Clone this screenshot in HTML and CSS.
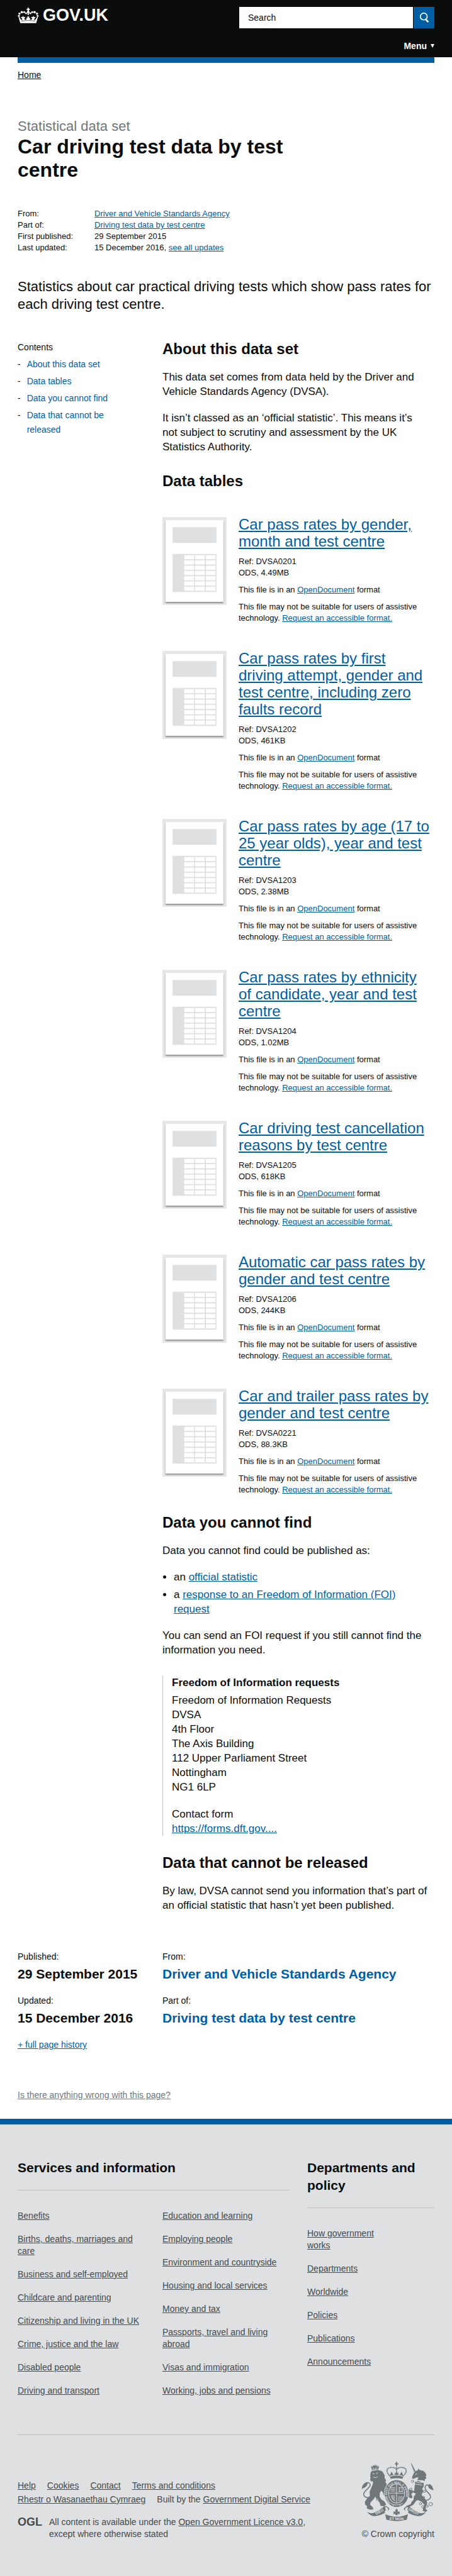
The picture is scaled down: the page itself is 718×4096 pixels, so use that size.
FILE: index.html
```
<!DOCTYPE html>
<html lang="en">
<head>
<meta charset="utf-8">
<meta name="viewport" content="width=device-width, initial-scale=1">
<title>Car driving test data by test centre - GOV.UK</title>
<link rel="stylesheet" href="styles.css">
</head>
<body>
<svg class="sprite" aria-hidden="true">
  <symbol id="spreadsheet" viewBox="0 0 297 420" preserveAspectRatio="none">
    <path fill="#dee0e2" d="M36 36h225v81H36zM36 174h225v195H36z"/>
    <g fill="#fff">
      <path d="M96 180h50v21H96zM151 180h50v21h-50zM207 180h49v21h-49z"/>
      <path d="M96 207h50v21H96zM151 207h50v21h-50zM207 207h49v21h-49z"/>
      <path d="M96 234h50v21H96zM151 234h50v21h-50zM207 234h49v21h-49z"/>
      <path d="M96 261h50v21H96zM151 261h50v21h-50zM207 261h49v21h-49z"/>
      <path d="M96 288h50v21H96zM151 288h50v21h-50zM207 288h49v21h-49z"/>
      <path d="M96 315h50v21H96zM151 315h50v21h-50zM207 315h49v21h-49z"/>
      <path d="M96 342h50v21H96zM151 342h50v21h-50zM207 342h49v21h-49z"/>
    </g>
  </symbol>
</svg>

<header class="site-header">
  <div class="header-row">
    <a class="logo" href="#">
      <svg class="crown" viewBox="91 36 107 79" aria-hidden="true" fill="#fff">
        <path d="M141 37h6v5h5v6h-5l1 6a6 6 0 0 1-2 11l2 8h-8l2-8a6 6 0 0 1-2-11l1-6h-5v-6h5z"/>
        <circle cx="97" cy="78" r="5"/><circle cx="100" cy="67" r="5.500"/><circle cx="112" cy="59" r="6"/><circle cx="124" cy="59" r="5"/><circle cx="133" cy="65" r="4.500"/>
        <circle cx="191" cy="78" r="5"/><circle cx="188" cy="67" r="5.500"/><circle cx="176" cy="59" r="6"/><circle cx="164" cy="59" r="5"/><circle cx="155" cy="65" r="4.500"/>
        <path d="M95 83l5 1 8 14 5-2-1-7-4-1v-5l7 1 3-8 3 8 7-1v5l-4 2 3 7 7-1 5-4-5 1v-6l6 2-1-8h10l-1 8 6-2v6l-5-1 5 4 7 1 3-7-4-2v-5l7 1 3-8 3 8 7-1v5l-4 1-1 7 5 2 8-14 5-1-9 31h-80z"/>
        <path fill="none" stroke="#0b0c0c" stroke-width="2" d="M108 104q36-6 72 0M128 90l3 10M160 90l-3 10M112 92l2 9M176 92l-2 9"/>
      </svg>
      <span>GOV.UK</span>
    </a>
    <form class="search" action="#" role="search">
      <input class="search-input" type="search" aria-label="Search" placeholder="Search">
      <button class="search-button" type="submit" aria-label="Search GOV.UK">
        <svg viewBox="0 0 20 24" aria-hidden="true" fill="none" stroke="#fff"><circle cx="9" cy="10" r="6.500" stroke-width="2"/><path d="M13 15.500l4.500 5" stroke-width="3"/></svg>
      </button>
    </form>
  </div>
  <button class="menu" type="button">Menu<svg viewBox="0 0 6 6" aria-hidden="true"><path fill="#fff" d="M0 0h6L3 6z"/></svg></button>
</header>

<main class="wrap">
  <div class="bar"></div>
  <nav class="crumbs" aria-label="Breadcrumb"><a href="#">Home</a></nav>

  <p class="context">Statistical data set</p>
  <h1>Car driving test data by test centre</h1>

  <dl class="meta">
    <dt>From:</dt><dd><a href="#">Driver and Vehicle Standards Agency</a></dd>
    <dt>Part of:</dt><dd><a href="#">Driving test data by test centre</a></dd>
    <dt>First published:</dt><dd>29 September 2015</dd>
    <dt>Last updated:</dt><dd>15 December 2016, <a href="#">see all updates</a></dd>
  </dl>

  <p class="lead">Statistics about car practical driving tests which show pass rates for each driving test centre.</p>

  <div class="columns">
    <nav class="contents" aria-label="Contents">
      <h2>Contents</h2>
      <ol>
        <li><a href="#about">About this data set</a></li>
        <li><a href="#tables">Data tables</a></li>
        <li><a href="#find">Data you cannot find</a></li>
        <li><a href="#released">Data that cannot be released</a></li>
      </ol>
    </nav>

    <article class="govspeak">
      <h2 id="about">About this data set</h2>
      <p>This data set comes from data held by the Driver and Vehicle Standards Agency (DVSA).</p>
      <p>It isn’t classed as an ‘official statistic’. This means it’s not&nbsp;subject to scrutiny and assessment by the UK Statistics Authority.</p>

      <h2 id="tables">Data tables</h2>
      <div class="attachments">
        <section class="attachment">
          <a class="thumb" href="#" aria-label="Car pass rates by gender, month and test centre"><svg aria-hidden="true"><use href="#spreadsheet"/></svg></a>
          <div class="details">
            <h3><a href="#">Car pass rates by gender, month and test centre</a></h3>
            <p>Ref: DVSA0201<br>ODS, 4.49MB</p>
            <p>This file is in an <a href="#">OpenDocument</a> format</p>
            <p>This file may not be suitable for users of assistive technology. <a href="#">Request an accessible format.</a></p>
          </div>
        </section>
        <section class="attachment">
          <a class="thumb" href="#" aria-label="Car pass rates by first driving attempt"><svg aria-hidden="true"><use href="#spreadsheet"/></svg></a>
          <div class="details">
            <h3><a href="#">Car pass rates by first driving attempt, gender and test centre, including zero faults record</a></h3>
            <p>Ref: DVSA1202<br>ODS, 461KB</p>
            <p>This file is in an <a href="#">OpenDocument</a> format</p>
            <p>This file may not be suitable for users of assistive technology. <a href="#">Request an accessible format.</a></p>
          </div>
        </section>
        <section class="attachment">
          <a class="thumb" href="#" aria-label="Car pass rates by age"><svg aria-hidden="true"><use href="#spreadsheet"/></svg></a>
          <div class="details">
            <h3><a href="#">Car pass rates by age (17 to 25 year olds), year and test centre</a></h3>
            <p>Ref: DVSA1203<br>ODS, 2.38MB</p>
            <p>This file is in an <a href="#">OpenDocument</a> format</p>
            <p>This file may not be suitable for users of assistive technology. <a href="#">Request an accessible format.</a></p>
          </div>
        </section>
        <section class="attachment">
          <a class="thumb" href="#" aria-label="Car pass rates by ethnicity"><svg aria-hidden="true"><use href="#spreadsheet"/></svg></a>
          <div class="details">
            <h3><a href="#">Car pass rates by ethnicity of candidate, year and test centre</a></h3>
            <p>Ref: DVSA1204<br>ODS, 1.02MB</p>
            <p>This file is in an <a href="#">OpenDocument</a> format</p>
            <p>This file may not be suitable for users of assistive technology. <a href="#">Request an accessible format.</a></p>
          </div>
        </section>
        <section class="attachment">
          <a class="thumb" href="#" aria-label="Car driving test cancellation reasons"><svg aria-hidden="true"><use href="#spreadsheet"/></svg></a>
          <div class="details">
            <h3><a href="#">Car driving test cancellation reasons by test centre</a></h3>
            <p>Ref: DVSA1205<br>ODS, 618KB</p>
            <p>This file is in an <a href="#">OpenDocument</a> format</p>
            <p>This file may not be suitable for users of assistive technology. <a href="#">Request an accessible format.</a></p>
          </div>
        </section>
        <section class="attachment">
          <a class="thumb" href="#" aria-label="Automatic car pass rates"><svg aria-hidden="true"><use href="#spreadsheet"/></svg></a>
          <div class="details">
            <h3><a href="#">Automatic car pass rates by gender and test centre</a></h3>
            <p>Ref: DVSA1206<br>ODS, 244KB</p>
            <p>This file is in an <a href="#">OpenDocument</a> format</p>
            <p>This file may not be suitable for users of assistive technology. <a href="#">Request an accessible format.</a></p>
          </div>
        </section>
        <section class="attachment">
          <a class="thumb" href="#" aria-label="Car and trailer pass rates"><svg aria-hidden="true"><use href="#spreadsheet"/></svg></a>
          <div class="details">
            <h3><a href="#">Car and trailer pass rates by gender and test centre</a></h3>
            <p>Ref: DVSA0221<br>ODS, 88.3KB</p>
            <p>This file is in an <a href="#">OpenDocument</a> format</p>
            <p>This file may not be suitable for users of assistive technology. <a href="#">Request an accessible format.</a></p>
          </div>
        </section>
      </div>

      <h2 id="find">Data you cannot find</h2>
      <p>Data you cannot find could be published as:</p>
      <ul class="bullets">
        <li>an <a href="#">official statistic</a></li>
        <li>a <a href="#">response to an Freedom of Information (FOI) request</a></li>
      </ul>
      <p>You can send an FOI request if you still cannot find the information you need.</p>

      <div class="contact">
        <h3>Freedom of Information requests</h3>
        <address>Freedom of Information Requests<br>DVSA<br>4th Floor<br>The Axis Building<br>112 Upper Parliament Street<br>Nottingham<br>NG1 6LP</address>
        <p>Contact form<br><a href="#">https://forms.dft.gov....</a></p>
      </div>

      <h2 id="released">Data that cannot be released</h2>
      <p>By law, DVSA cannot send you information that’s part of an official statistic that hasn’t yet been published.</p>
    </article>
  </div>

  <div class="columns published">
    <dl>
      <div><dt>Published:</dt><dd>29 September 2015</dd></div>
      <div><dt>Updated:</dt><dd>15 December 2016</dd></div>
    </dl>
    <dl class="wide">
      <div><dt>From:</dt><dd><a href="#">Driver and Vehicle Standards Agency</a></dd></div>
      <div><dt>Part of:</dt><dd><a href="#">Driving test data by test centre</a></dd></div>
    </dl>
  </div>
  <p class="history"><a href="#">+ full page history</a></p>
  <p class="report"><a href="#">Is there anything wrong with this page?</a></p>
</main>

<footer class="site-footer">
  <div class="wrap">
    <div class="columns">
      <section class="services">
        <h2>Services and information</h2>
        <div class="lists">
          <ul>
            <li><a href="#">Benefits</a></li>
            <li><a href="#">Births, deaths, marriages and care</a></li>
            <li><a href="#">Business and self-employed</a></li>
            <li><a href="#">Childcare and parenting</a></li>
            <li><a href="#">Citizenship and living in the UK</a></li>
            <li><a href="#">Crime, justice and the law</a></li>
            <li><a href="#">Disabled people</a></li>
            <li><a href="#">Driving and transport</a></li>
          </ul>
          <ul>
            <li><a href="#">Education and learning</a></li>
            <li><a href="#">Employing people</a></li>
            <li><a href="#">Environment and countryside</a></li>
            <li><a href="#">Housing and local services</a></li>
            <li><a href="#">Money and tax</a></li>
            <li><a href="#">Passports, travel and living abroad</a></li>
            <li><a href="#">Visas and immigration</a></li>
            <li><a href="#">Working, jobs and pensions</a></li>
          </ul>
        </div>
      </section>
      <section class="departments">
        <h2>Departments and policy</h2>
        <ul>
          <li><a href="#">How government works</a></li>
          <li><a href="#">Departments</a></li>
          <li><a href="#">Worldwide</a></li>
          <li><a href="#">Policies</a></li>
          <li><a href="#">Publications</a></li>
          <li><a href="#">Announcements</a></li>
        </ul>
      </section>
    </div>

    <div class="legal">
      <div class="legal-text">
        <ul class="legal-links">
          <li><a href="#">Help</a></li>
          <li><a href="#">Cookies</a></li>
          <li><a href="#">Contact</a></li>
          <li><a href="#">Terms and conditions</a></li>
          <li><a href="#">Rhestr o Wasanaethau Cymraeg</a></li>
          <li>Built by the <a href="#">Government Digital Service</a></li>
        </ul>
        <div class="licence">
          <span class="ogl">OGL</span>
          <p>All content is available under the <a href="#">Open Government Licence v3.0</a>, except where otherwise stated</p>
        </div>
      </div>
      <div class="copyright">
        <svg viewBox="68 46 378 310" role="img" aria-label="Royal coat of arms" fill="#6f777b" stroke-linejoin="round" stroke-linecap="round">
          <!-- crown -->
          <path d="M249 48h6v7h6v6h-6v8a7 7 0 0 1-6 0v-8h-6v-6h6z"/>
          <path fill="none" stroke="#6f777b" stroke-width="6" stroke-linecap="butt" stroke-dasharray="6 2" d="M219 122C194 100 199 80 220 77c14-2 26 2 32 10 6-8 18-12 32-10 21 3 26 23 1 45"/>
          <path fill="none" stroke="#6f777b" stroke-width="4" d="M252 72v44"/>
          <path d="M217 120l4-10 5-13 7 14 6 4 5-4-3-8 7 3 4-10 4 10 7-3-3 8 5 4 6-4 7-14 5 13 4 10q-35-9-70 0zM218 124q34-9 68 0l-3 12q-31-7-62 0z"/>
          <!-- lion -->
          <path d="M124 91l-5-22 8 5 3-10 6 6 4-9 4 9 6-6 3 9 8-4-4 20q-17-5-33 2z"/>
          <path fill="none" stroke="#dee0e2" stroke-width="2" d="M125 85q16-5 31-1M129 75l4 6M149 74l-4 6"/>
          <path d="M118 101l8-7 30-4 18 5 9 9 8 16-2 9 9 15-4 7 9 17 1 13-9 6 4 9-8 5 9 14-4 9-12-5-3-13-8-9-8 12-1 18 8 15 18 12 8 16-11 8-18-2-5-17-16-13-6-18-10 15-15 15-2 12 14 13 2 12-18 1-15-7 1-13-10-6-1-16 12-18 14-13-2-19 10-25 8-19-2-13-9 3-5-12 4-5-3-9z"/>
          <path fill="none" stroke="#dee0e2" stroke-width="3" d="M128 108l9 3M146 107l8-2M132 127l13 3 8-5M150 238l10 21"/>
          <path fill="none" stroke="#6f777b" stroke-width="5" d="M107 234c-25-2-33-17-18-34 12-14 31-24 25-38-5-11-20-8-27 4"/>
          <path d="M71 191l3-17 8-12 13-9 8 4-4 13-9 9-7 4-6 1z"/>
          <!-- unicorn -->
          <path d="M326 54l5 4 19 38-7 4z"/>
          <path d="M343 103l9-8 10-3 2-10 8 8 18 4 11 10 6 14-5 4 5 10-8 6-1 9-13-4-26-1 7-15-13 3-13 6-8-3 2-11z"/>
          <path d="M348 151l15-4 29 9 1 19-8 11 5 16-9 17 14 15 13 15 3 15-9 17 2 12 9 8-13 6-12-5 2-19 6-13-14-15-20-9-9 5-15 20-17 9-19 6-1-9 23-9 8-16 8-7 1-16 11-16-15-8-9 11 7 13-5 9-18-8-5-16 9-11-7-5-14 1-6-9 6-7 17 6 18 6 13 4z"/>
          <path fill="none" stroke="#dee0e2" stroke-width="3" d="M350 112l7-2M339 162l45 6M345 146q21 17 47 7"/>
          <path fill="none" stroke="#6f777b" stroke-width="5" d="M398 248c25-2 36-14 27-29-10-16-28-23-25-41 2-12 14-14 22-8"/>
          <path d="M414 170l11-7 12 12 7 20-13-4-12-8z"/>
          <g fill="none" stroke="#6f777b" stroke-width="3"><circle cx="335" cy="149" r="6"/><circle cx="326" cy="189" r="6"/><circle cx="396" cy="201" r="6"/><circle cx="391" cy="232" r="6"/><circle cx="376" cy="265" r="6"/><circle cx="389" cy="281" r="7"/><circle cx="410" cy="278" r="6"/><circle cx="429" cy="267" r="9"/></g>
          <!-- garter and shield -->
          <ellipse cx="252" cy="212" rx="65" ry="73" fill="#dee0e2"/>
          <ellipse cx="252" cy="212" rx="62" ry="70"/>
          <ellipse cx="252" cy="212" rx="43" ry="51" fill="#dee0e2"/>
          <ellipse cx="252" cy="212" rx="40" ry="48"/>
          <path id="garter" fill="none" d="M221 260A49 56 0 1 1 283 260"/>
          <text class="motto-small"><textPath href="#garter">HONI SOIT QUI MAL Y PENSE</textPath></text>
          <path fill="none" stroke="#dee0e2" stroke-width="3" d="M252 165v94M212 210h80M222 182h22M221 190h24M222 199h22M262 230h24M260 239h24M260 248h18M264 182h15M264 201h20M266 182v19M281 182v19M225 222q2 20 18 28M232 221v20M239 221v27"/>
          <path fill="none" stroke="#dee0e2" stroke-width="3" d="M222 264q30 16 60 0M235 272l-3 9M269 272l3 9"/>
          <!-- motto ribbon -->
          <path d="M98 306q19 13 38 5 31-12 52-33 20-1 27 15-28 30-71 36-28 2-46-23zM406 306q-19 13-38 5-31-12-52-33-20-1-27 15 28 30 71 36 28 2 46-23z"/>
          <path fill="#dee0e2" d="M191 283q17-1 17 13l-8 19-11-8q12-10 2-24zM313 283q-17-1-17 13l8 19 11-8q-12-10-2-24z"/>
          <path d="M193 319q59 27 118 0l-6 29q-53 14-106 0z"/>
          <path d="M252 290q12 12 3 20 11-10 14 0-1 9-12 7v7h-10v-7q-11 2-12-7 3-10 14 0-9-8 3-20z"/>
          <path fill="none" stroke="#6f777b" stroke-width="3" d="M236 317h32"/>
          <text class="motto" x="252" y="349">ET MON</text>
          <text class="motto" x="163" y="313" transform="rotate(-29 163 307)">DIEU</text>
          <text class="motto" x="340" y="312" transform="rotate(29 340 306)">DROIT</text>
        </svg>
        <p>© Crown copyright</p>
      </div>
    </div>
  </div>
</footer>
</body>
</html>
```
FILE: styles.css
```
* {
  box-sizing: border-box;
}

body {
  display: flex;
  flex-direction: column;
  min-height: 100vh;
  margin: 0;
  background: #fff;
  color: #0b0c0c;
  font: 17px/23px "Liberation Sans", Arial, sans-serif;
}

h1, h2, h3, p, ul, ol, dl, dd, address {
  margin: 0;
  padding: 0;
}

ul, ol {
  list-style: none;
}

address {
  font-style: normal;
}

a {
  color: #005ea5;
}

button {
  border: 0;
  padding: 0;
  cursor: pointer;
}

.sprite {
  display: none;
}

.wrap {
  padding: 0 28px;
}

.columns {
  display: grid;
  grid-template-columns: repeat(3, minmax(0, 1fr));
  column-gap: 28px;
}

/* Header */

.site-header {
  display: flex;
  flex-direction: column;
  padding: 11px 28px 8px;
  background: #0b0c0c;
}

.header-row {
  display: flex;
  justify-content: space-between;
  align-items: flex-start;
}

.logo {
  display: flex;
  align-items: center;
  gap: 6px;
  color: #fff;
  font-size: 27px;
  font-weight: 700;
  line-height: 26px;
  text-decoration: none;
}

.crown {
  width: 34px;
  height: 25px;
}

.search {
  display: flex;
  gap: 1px;
  flex: 0 0 310px;
  height: 34px;
}

.search-input {
  flex: 1;
  min-width: 0;
  border: 0;
  border-radius: 0;
  padding: 0 14px;
  background: #fff;
  color: #0b0c0c;
  font: 14px/20px "Liberation Sans", Arial, sans-serif;
  appearance: none;
}

.search-input::placeholder {
  color: #0b0c0c;
  opacity: 1;
}

.search-button {
  display: flex;
  align-items: center;
  justify-content: center;
  width: 33px;
  background: #005ea5;
}

.search-button svg {
  width: 18px;
  height: 20px;
}

.menu {
  display: flex;
  align-items: center;
  align-self: flex-end;
  gap: 6px;
  margin-top: 18px;
  background: none;
  color: #fff;
  font: 700 14px/20px "Liberation Sans", Arial, sans-serif;
}

.menu svg {
  width: 6px;
  height: 6px;
}

.bar {
  height: 9px;
  background: #005ea5;
}

.crumbs {
  margin-top: 9px;
  font-size: 14px;
  line-height: 20px;
}

.crumbs a {
  color: #0b0c0c;
}

/* Title block */

.context {
  margin-top: 58px;
  color: #6f777b;
  font-size: 22px;
  line-height: 28px;
}

h1 {
  width: 67%;
  font-size: 32px;
  line-height: 37px;
}

.meta {
  display: grid;
  grid-template-columns: 122px 1fr;
  margin-top: 42px;
  font-size: 13px;
  line-height: 18px;
}

.lead {
  margin: 39px 0 43px;
  font-size: 22px;
  line-height: 28px;
}

/* Contents list */

.contents {
  padding-right: 28px;
  font-size: 14px;
  line-height: 23px;
}

.contents h2 {
  font: inherit;
}

.contents li {
  display: flex;
  gap: 10px;
  margin-top: 4px;
}

.contents li::before {
  content: "-";
}

.contents a {
  text-decoration: none;
}

/* Body text */

.govspeak {
  grid-column: span 2;
}

.govspeak > h2 {
  margin-top: 29px;
  font-size: 24px;
  line-height: 28px;
}

.govspeak > h2:first-child {
  margin-top: 0;
}

.govspeak > p,
.bullets {
  margin-top: 19px;
}

.bullets {
  display: grid;
  gap: 5px;
  padding: 0 18px;
  list-style: disc;
}

.attachments {
  display: grid;
  gap: 41px;
  margin-top: 41px;
}

.attachment {
  display: flex;
  align-items: flex-start;
  gap: 19px;
}

.thumb {
  flex: none;
  margin-top: 2px;
  padding: 5px;
  background: #e7e7e7;
}

.thumb svg {
  display: block;
  width: 92px;
  height: 130px;
  background: #fff;
  box-shadow: 0 2px 2px rgba(11, 12, 12, 0.4);
}

.details {
  flex: 1;
  font-size: 13px;
  line-height: 18px;
}

.details h3 {
  margin-bottom: 10px;
  padding-right: 6px;
  font-size: 24px;
  font-weight: 400;
  line-height: 27px;
}

.details p + p {
  margin-top: 9px;
}

.contact {
  margin-top: 29px;
  border-left: 1px solid #bfc1c3;
  padding-left: 14px;
}

.contact h3 {
  margin-bottom: 5px;
  font-size: 17px;
}

.contact p {
  margin-top: 20px;
}

/* Publication details */

.published {
  margin-top: 60px;
}

.published dl {
  display: grid;
  gap: 18px;
}

.published .wide {
  grid-column: span 2;
}

.published dt {
  margin-bottom: 4px;
  font-size: 14px;
  line-height: 20px;
}

.published dd {
  font-size: 21px;
  font-weight: 700;
  line-height: 28px;
}

.published a {
  text-decoration: none;
}

.history,
.report {
  font-size: 14px;
  line-height: 20px;
}

.history {
  margin-top: 18px;
}

.report {
  margin: 60px 0 28px;
}

.report a {
  color: #6f777b;
}

/* Footer */

.site-footer {
  flex: 1;
  border-top: 9px solid #005ea5;
  padding: 55px 0 57px;
  background: #dee0e2;
  color: #454a4c;
  font-size: 14px;
  line-height: 19px;
}

.site-footer a {
  color: #454a4c;
}

.site-footer h2 {
  margin-bottom: 31px;
  border-bottom: 1px solid #bfc1c3;
  padding-bottom: 21px;
  color: #0b0c0c;
  font-size: 21px;
  line-height: 28px;
}

.services {
  grid-column: span 2;
}

.lists {
  display: grid;
  grid-template-columns: 1fr 1fr;
  column-gap: 28px;
}

.services li + li,
.departments li + li {
  margin-top: 18px;
}

.departments ul {
  padding-right: 60px;
}

.legal {
  display: flex;
  justify-content: space-between;
  align-items: flex-end;
  gap: 16px;
  margin-top: 60px;
  border-top: 1px solid #bfc1c3;
  padding-top: 42px;
}

.legal-text {
  flex: 1;
}

.legal-links {
  display: flex;
  flex-wrap: wrap;
  column-gap: 18px;
  line-height: 22px;
}

.licence {
  display: flex;
  gap: 11px;
  margin-top: 16px;
}

.licence p {
  max-width: 440px;
}

.ogl {
  font-size: 18px;
  font-weight: 700;
  line-height: 18px;
}

.copyright {
  display: grid;
  justify-items: end;
  gap: 11px;
}

.copyright svg {
  width: 117px;
  height: 95px;
}

.motto {
  fill: #dee0e2;
  font-size: 19px;
  font-weight: 700;
  text-anchor: middle;
}

.motto-small {
  fill: #dee0e2;
  font-size: 16px;
  font-weight: 700;
}
```
